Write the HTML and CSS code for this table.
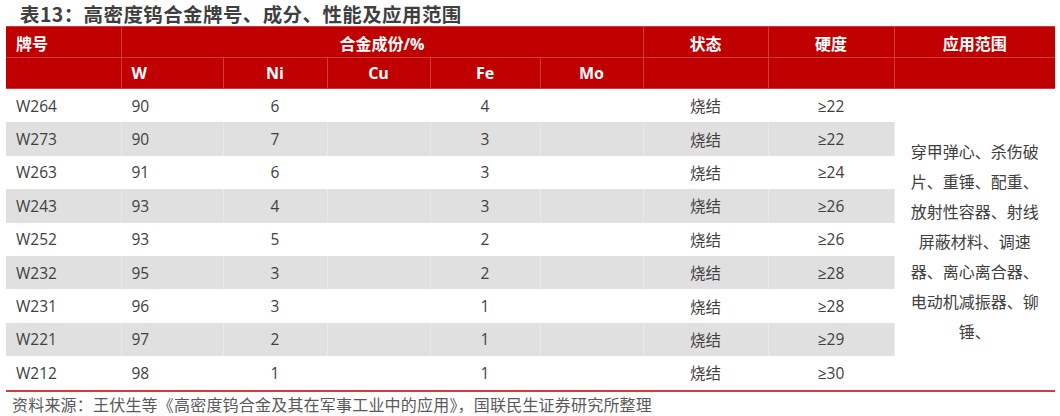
FILE: index.html
```html
<!DOCTYPE html>
<html lang="zh">
<head>
<meta charset="utf-8">
<link rel="stylesheet" href="styles.css">
</head>
<body>
<div class="page">
  <h1 class="title">表13：高密度钨合金牌号、成分、性能及应用范围</h1>
  <table class="tbl">
    <colgroup>
      <col class="c1"><col class="c2"><col class="c3"><col class="c4"><col class="c5"><col class="c6"><col class="c7"><col class="c8"><col class="c9">
    </colgroup>
    <thead>
      <tr class="h1">
        <th class="left">牌号</th>
        <th colspan="5">合金成份/%</th>
        <th>状态</th>
        <th>硬度</th>
        <th>应用范围</th>
      </tr>
      <tr class="h2">
        <th></th>
        <th class="left">W</th>
        <th>Ni</th>
        <th>Cu</th>
        <th>Fe</th>
        <th>Mo</th>
        <th></th>
        <th></th>
        <th></th>
      </tr>
    </thead>
    <tbody>
      <tr><td class="left">W264</td><td class="left">90</td><td>6</td><td></td><td>4</td><td></td><td>烧结</td><td>≥22</td>
        <td class="app" rowspan="9">穿甲弹心、杀伤破片、重锤、配重、放射性容器、射线屏蔽材料、调速器、离心离合器、电动机减振器、铆锤、</td></tr>
      <tr class="alt"><td class="left">W273</td><td class="left">90</td><td>7</td><td></td><td>3</td><td></td><td>烧结</td><td>≥22</td></tr>
      <tr><td class="left">W263</td><td class="left">91</td><td>6</td><td></td><td>3</td><td></td><td>烧结</td><td>≥24</td></tr>
      <tr class="alt"><td class="left">W243</td><td class="left">93</td><td>4</td><td></td><td>3</td><td></td><td>烧结</td><td>≥26</td></tr>
      <tr><td class="left">W252</td><td class="left">93</td><td>5</td><td></td><td>2</td><td></td><td>烧结</td><td>≥26</td></tr>
      <tr class="alt"><td class="left">W232</td><td class="left">95</td><td>3</td><td></td><td>2</td><td></td><td>烧结</td><td>≥28</td></tr>
      <tr><td class="left">W231</td><td class="left">96</td><td>3</td><td></td><td>1</td><td></td><td>烧结</td><td>≥28</td></tr>
      <tr class="alt"><td class="left">W221</td><td class="left">97</td><td>2</td><td></td><td>1</td><td></td><td>烧结</td><td>≥29</td></tr>
      <tr class="last"><td class="left">W212</td><td class="left">98</td><td>1</td><td></td><td>1</td><td></td><td>烧结</td><td>≥30</td></tr>
    </tbody>
  </table>
  <p class="source">资料来源：王伏生等《高密度钨合金及其在军事工业中的应用》，国联民生证券研究所整理</p>
</div>
</body>
</html>
```
FILE: styles.css
```css
html, body {
  margin: 0;
  padding: 0;
  background: #ffffff;
}
.page {
  width: 1060px;
  height: 416px;
  overflow: hidden;
  font-family: "Open Sans", "Noto Sans CJK SC", sans-serif;
}
.title {
  margin: 0 0 0 20px;
  height: 26px;
  font-family: "Noto Sans CJK SC", sans-serif;
  font-size: 19.5px;
  font-weight: 700;
  line-height: 28px;
  color: #3f3f3f;
  letter-spacing: 0.4px;
}
.tbl {
  margin-left: 6px;
  border-collapse: collapse;
  table-layout: fixed;
  width: 1049px;
}
.c1 { width: 115px; }
.c2 { width: 102px; }
.c3 { width: 104px; }
.c4 { width: 103px; }
.c5 { width: 110px; }
.c6 { width: 103px; }
.c7 { width: 125px; }
.c8 { width: 126px; }
.c9 { width: 161px; }
.tbl th {
  background: #c00000;
  color: #ffffff;
  font-family: "Open Sans", "Noto Sans CJK SC", sans-serif;
  font-weight: 700;
  font-size: 16px;
  height: 30px;
  padding: 0;
  text-align: center;
  border: 1px solid #cf3a3a;
  vertical-align: middle;
}
.tbl .h1 th {
  height: 29px;
  padding-top: 1px;
}
.tbl .h1 th:first-child,
.tbl .h2 th:first-child {
  border-left: none;
}
.tbl .h1 th:last-child,
.tbl .h2 th:last-child {
  border-right: none;
}
.tbl th.left {
  text-align: left;
  padding-left: 10px;
}
.tbl td {
  height: 33.4px;
  padding: 0;
  text-align: center;
  font-size: 15.5px;
  color: #404040;
  border: 1px solid #ffffff;
  border-top: none;
  border-bottom: none;
  vertical-align: middle;
  background: #ffffff;
}
.tbl tr td:first-child {
  border-left: none;
}
.tbl td.left {
  text-align: left;
  padding-left: 10px;
}
.tbl tr.alt td {
  background: #e0e0e0;
  border-left-color: #e9e9e9;
  border-right-color: #e9e9e9;
}
.tbl tr.last td {
  border-bottom: 2px solid #d13b3b;
}
.tbl td.app {
  background: #ffffff;
  border: none;
  border-bottom: 2px solid #d13b3b;
  padding: 4px 12px 0 12px;
  font-family: "Noto Sans CJK SC", sans-serif;
  font-size: 16px;
  line-height: 30px;
  text-align: center;
}
.source {
  margin: 2px 0 0 12px;
  font-family: "Noto Sans CJK SC", sans-serif;
  font-size: 16px;
  line-height: 20px;
  color: #595959;
  letter-spacing: 0.2px;
}
```
